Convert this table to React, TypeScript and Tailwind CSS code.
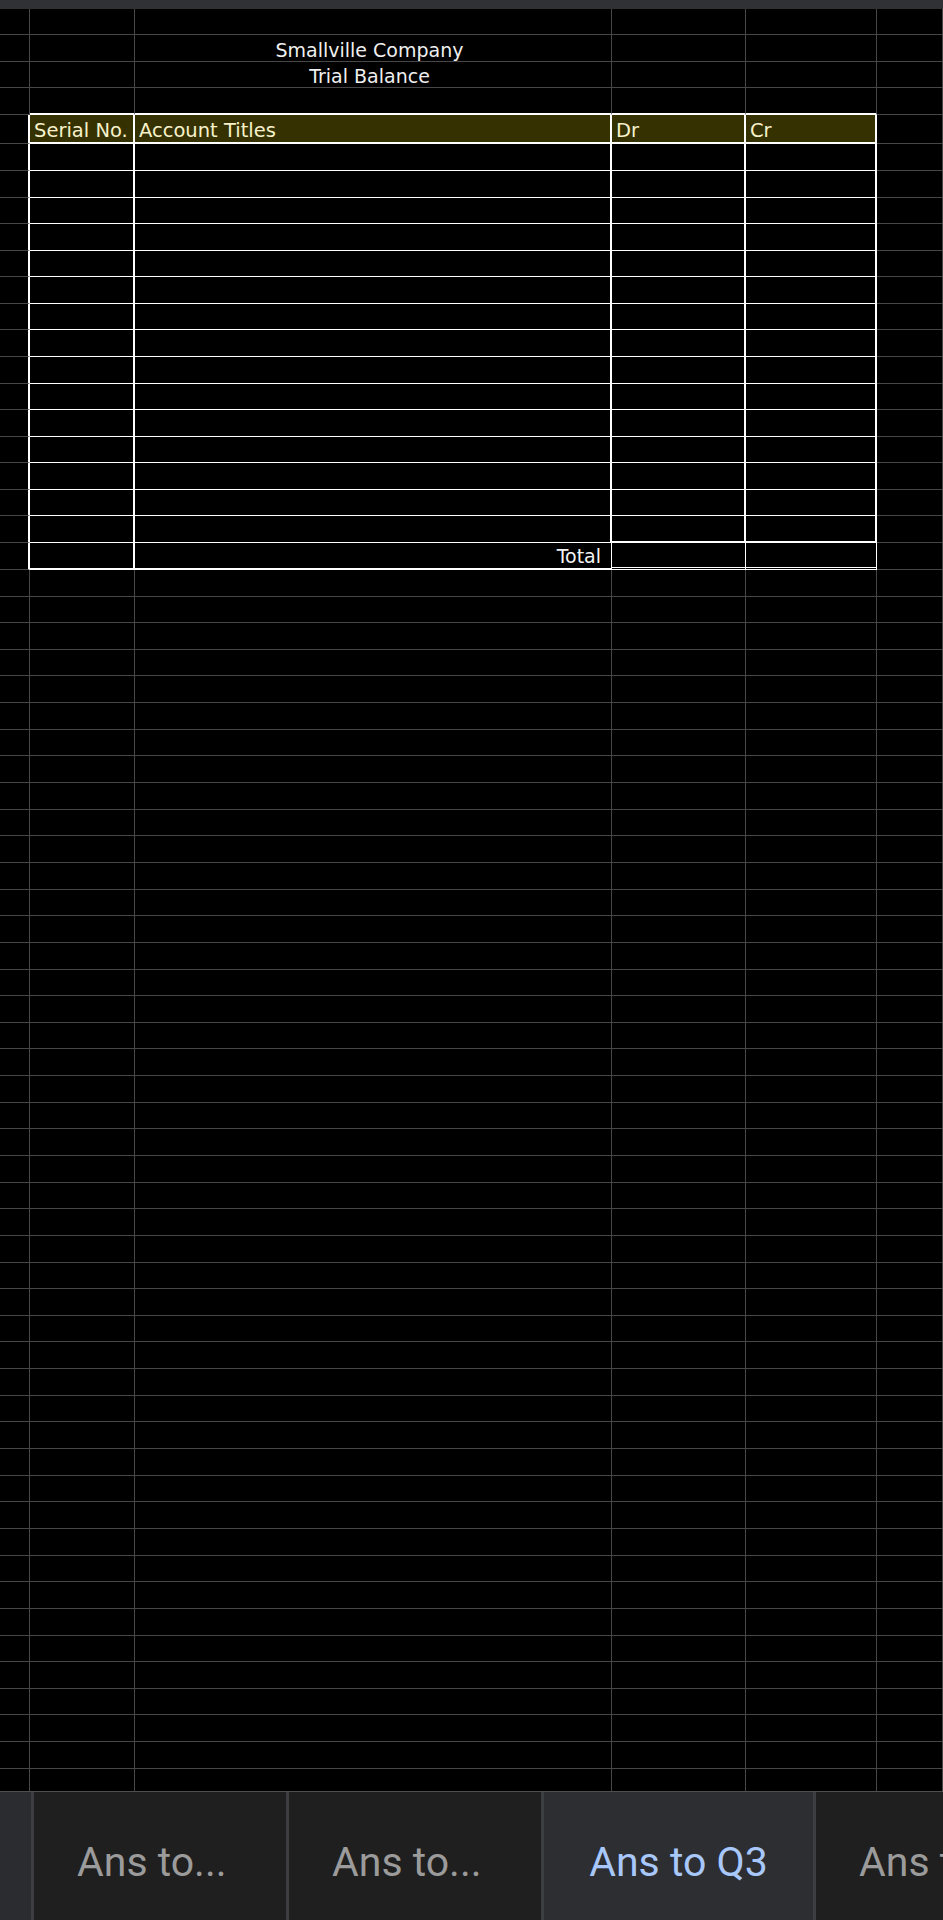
import { Fragment } from 'react'

// column widths of the visible sheet, left to right
const COLS = ['w-[30px]', 'w-[105px]', 'w-[477px]', 'w-[134px]', 'w-[131px]', 'w-[66px]']

const HEADER = 4
const TOTAL = 20
const ROW_COUNT = 68

const HEADINGS = ['', 'Serial No.', 'Account Titles', 'Dr', 'Cr', '']

function rowHeight(r: number) {
  if (r === 0) return 'h-[26px]'
  if (r === 1 || r === 2) return 'h-[26.7px]'
  if (r === 3) return 'h-[26.6px]'
  if (r === HEADER) return 'h-[29.5px]'
  if (r > HEADER && r < TOTAL) return 'h-[26.57px]'
  if (r === TOTAL) return 'h-[27px]'
  return 'h-[26.65px]'
}

const GRID_R = 'border-r border-r-[#474747]'
const THICK_R = 'border-r-2 border-r-white'
const THIN_R = 'border-r border-r-white'
const GRID_B = 'border-b border-b-[#474747]'
const THICK_B = 'border-b-2 border-b-white'
const THIN_B = 'border-b border-b-white'
const DOUBLE_B = 'border-b-[3px] border-double border-b-white'

function rightBorder(r: number, c: number) {
  if (c === 0 && r >= HEADER && r <= TOTAL) return THICK_R
  if (c >= 1 && c <= 4 && r >= HEADER && r < TOTAL) return THICK_R
  if (r === TOTAL) {
    if (c === 1) return THICK_R
    if (c >= 2 && c <= 4) return THIN_R
  }
  return GRID_R
}

function bottomBorder(r: number, c: number) {
  const inTable = c >= 1 && c <= 4
  if (!inTable) return GRID_B
  if (r === 3 || r === HEADER) return THICK_B
  if (r > HEADER && r < TOTAL - 1) return THIN_B
  if (r === TOTAL - 1) return c >= 3 ? THICK_B : THIN_B
  if (r === TOTAL) return c >= 3 ? DOUBLE_B : THICK_B
  return GRID_B
}

function CellContent({ r, c }: { r: number; c: number }) {
  if (c === 2 && r === 1)
    return <span className="w-full pr-[7px] pb-[1px] text-center text-[19px] leading-none text-[#efefef]">Smallville Company</span>
  if (c === 2 && r === 2)
    return <span className="w-full pr-[7px] pb-[1px] text-center text-[19px] leading-none text-[#efefef]">Trial Balance</span>
  if (r === HEADER && HEADINGS[c])
    return <span className="pl-[4px] pb-[2px] text-[19.5px] leading-none whitespace-nowrap text-[#f6f1cc]">{HEADINGS[c]}</span>
  if (r === TOTAL && c === 2)
    return <span className="w-full pr-[10px] pb-[2px] text-right text-[19px] leading-none text-[#f4f4f4]">Total</span>
  return null
}

function SheetRow({ r }: { r: number }) {
  return (
    <div className={`flex ${rowHeight(r)}`}>
      {COLS.map((w, c) => (
        <div
          key={c}
          className={`flex shrink-0 items-end overflow-hidden ${w} ${rightBorder(r, c)} ${bottomBorder(r, c)} ${
            r === HEADER && c >= 1 && c <= 4 ? 'bg-[#363100]' : ''
          }`}
        >
          <CellContent r={r} c={c} />
        </div>
      ))}
    </div>
  )
}

function TabSep() {
  return <div className="w-[3px] shrink-0 bg-[#3d3e41]" />
}

function Tab({ label, width, active }: { label: string; width: string; active?: boolean }) {
  return (
    <div
      className={`${width} shrink-0 overflow-hidden whitespace-nowrap pt-[50px] text-[41px] leading-none ${
        active ? 'bg-[#2d2e31] text-center text-[#a8c7fa]' : 'bg-[#1f1f1f] pl-[43px] text-[#9b9b9b]'
      }`}
    >
      {label}
    </div>
  )
}

export default function App() {
  const rows = Array.from({ length: ROW_COUNT }, (_, i) => i)

  return (
    <div className="flex h-[1920px] w-[943px] flex-col overflow-hidden bg-black">
      <div className="h-[9px] shrink-0 bg-[#303134]" />

      <div className="h-[1782px] shrink-0 overflow-hidden font-['DejaVu_Sans',sans-serif]">
        {rows.map((r) => (
          <Fragment key={r}>
            <SheetRow r={r} />
          </Fragment>
        ))}
      </div>

      {/* sheet tabs */}
      <div className="flex h-[129px] shrink-0 overflow-hidden border-t border-t-[#4f4f4f] bg-[#1f1f1f] font-['Roboto',sans-serif]">
        <div className="w-[31px] shrink-0 bg-[#2b2c30]" />
        <TabSep />
        <Tab label="Ans to..." width="w-[252px]" />
        <TabSep />
        <Tab label="Ans to..." width="w-[252px]" />
        <TabSep />
        <Tab label="Ans to Q3" width="w-[269px]" active />
        <TabSep />
        <Tab label="Ans to Q4" width="w-[160px]" />
      </div>
    </div>
  )
}
